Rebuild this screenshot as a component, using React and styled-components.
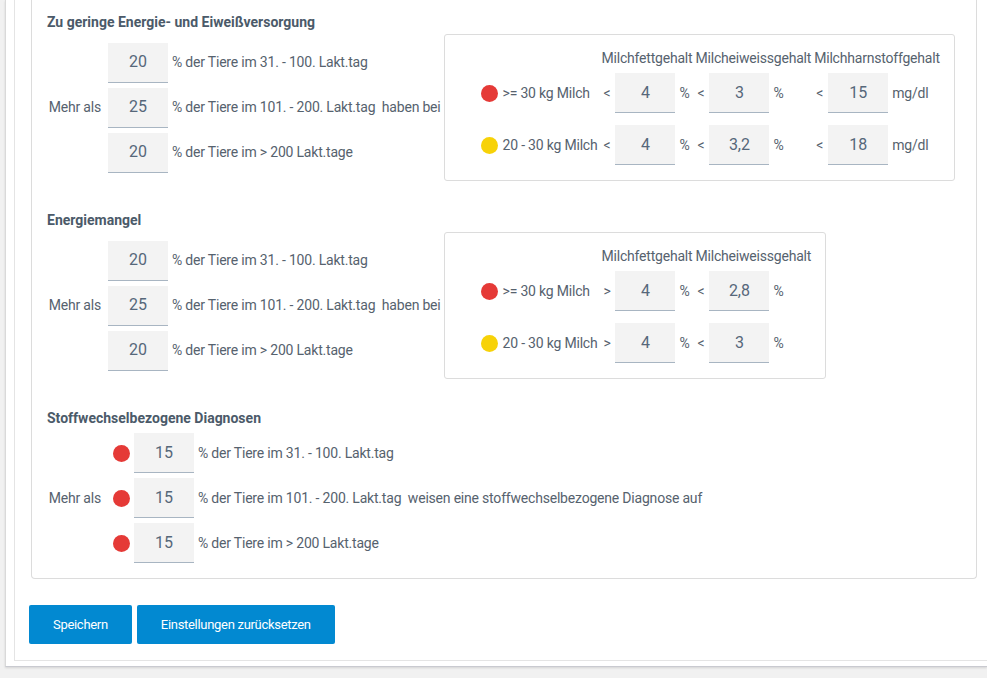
import React from "react";
import styled, { createGlobalStyle } from "styled-components";

const GlobalStyle = createGlobalStyle`
  html, body { margin: 0; padding: 0; }
  body {
    background: #f1f1f1;
    font-family: Roboto, "Noto Sans", "Liberation Sans", sans-serif;
    font-size: 14px;
    color: #56626e;
    letter-spacing: -0.2px;
  }
  * { box-sizing: border-box; }
`;

const Shell = styled.div`
  padding-left: 5px;
  padding-bottom: 9px;
`;

const OuterPanel = styled.div`
  background: #fff;
  border-left: 1px solid #d9d9d9;
  border-bottom: 1px solid #c9cad0;
  box-shadow: 0 1px 2px rgba(0, 0, 0, 0.12);
  padding: 0 0 5px 8px;
`;

const InnerPanel = styled.div`
  border-left: 1px solid #e4e4e4;
  border-bottom: 1px solid #e4e4e4;
  padding: 0 0 16px 16px;
`;

const Card = styled.div`
  width: 946px;
  border: 1px solid #dcdcdc;
  border-top: none;
  border-radius: 0 0 4px 4px;
  padding: 14px 15px 15px 15px;
`;

const Heading = styled.h3`
  margin: ${(p) => (p.$first ? "0" : "31px")} 0 0 0;
  font-size: 14px;
  line-height: 17px;
  font-weight: 700;
  letter-spacing: 0;
  color: #4b5a69;
`;

const SectionRow = styled.div`
  display: flex;
  align-items: center;
  gap: 3px;
  margin-top: 3px;
`;

const ShareGrid = styled.div`
  display: grid;
  width: max-content;
  justify-content: start;
  grid-template-columns: ${(p) => (p.$dots ? "61px auto 60px auto" : "61px 60px auto")};
  row-gap: 5px;
  align-items: center;
  margin-top: ${(p) => (p.$dots ? "6px" : "0")};
`;

const RowLabel = styled.div`
  grid-column: 1;
  grid-row: 1 / span 3;
  align-self: center;
  text-align: right;
  padding-right: 7px;
  line-height: 17px;
  white-space: nowrap;
`;

const Field = styled.input`
  width: 60px;
  height: 40px;
  border: none;
  border-bottom: 1px solid #a8b5c2;
  background: #f3f3f3;
  font-family: inherit;
  font-size: 16px;
  color: #56677a;
  text-align: center;
  padding: 0 0 1px;
  letter-spacing: 0;
  outline: none;
`;

const ShareText = styled.span`
  padding-left: 4px;
  white-space: pre;
  line-height: 17px;
`;

const Dot = styled.span`
  display: inline-block;
  flex: none;
  width: ${(p) => p.$size}px;
  height: ${(p) => p.$size}px;
  border-radius: 50%;
  background: ${(p) => (p.$tone === "yellow" ? "#f7d208" : "#e53a37")};
`;

const DotCell = styled.div`
  display: flex;
  align-items: center;
  padding: 0 4px 0 5px;
`;

const LimitBox = styled.div`
  flex: none;
  border: 1px solid #dcdcdc;
  border-radius: 3px;
  padding: 15px 14px 15px 36px;
  display: grid;
  grid-template-columns: auto repeat(${(p) => p.$groups}, auto);
  grid-template-rows: 17px 46px 52px;
  column-gap: 3px;
  align-items: end;
`;

const ColHead = styled.div`
  line-height: 17px;
  white-space: nowrap;
`;

const MilkLabel = styled.div`
  height: 40px;
  display: flex;
  align-items: center;
  gap: 5px;
  padding-right: 1px;
  white-space: nowrap;
`;

const Limit = styled.div`
  height: 40px;
  display: flex;
  align-items: center;
`;

const Op = styled.span`
  width: 14px;
  padding-left: 2px;
  flex: none;
`;

const Unit = styled.span`
  padding-left: 4px;
  white-space: nowrap;
`;

const Actions = styled.div`
  display: flex;
  gap: 5px;
  margin-top: 26px;
  margin-left: -2px;
`;

const Button = styled.button`
  height: 39px;
  padding: 0 24px;
  border: none;
  border-radius: 2px;
  background: #0289d1;
  color: #fff;
  font-family: inherit;
  font-size: 13px;
  letter-spacing: -0.3px;
  cursor: pointer;
`;

const periods = [
  "% der Tiere im 31. - 100. Lakt.tag",
  "% der Tiere im 101. - 200. Lakt.tag",
  "% der Tiere im > 200 Lakt.tage",
];

function ShareBlock({ values, verb, dots }) {
  return (
    <ShareGrid $dots={dots}>
      <RowLabel>Mehr als</RowLabel>
      {values.map((v, i) => (
        <React.Fragment key={i}>
          {dots && (
            <DotCell style={{ gridRow: i + 1, gridColumn: 2 }}>
              <Dot $size={17} $tone="red" />
            </DotCell>
          )}
          <Field
            readOnly
            defaultValue={v}
            style={{ gridRow: i + 1, gridColumn: dots ? 3 : 2 }}
          />
          <ShareText style={{ gridRow: i + 1, gridColumn: dots ? 4 : 3 }}>
            {periods[i] + (i === 1 ? `  ${verb}` : "")}
          </ShareText>
        </React.Fragment>
      ))}
    </ShareGrid>
  );
}

function MilkLimits({ columns, rows }) {
  return (
    <LimitBox $groups={columns.length}>
      <div />
      {columns.map((c) => (
        <ColHead key={c.title}>{c.title}</ColHead>
      ))}
      {rows.map((r) => (
        <React.Fragment key={r.label}>
          <MilkLabel>
            <Dot $size={17} $tone={r.tone} />
            {r.label}
          </MilkLabel>
          {columns.map((c, j) => (
            <Limit key={c.title}>
              <Op>{c.op}</Op>
              <Field readOnly defaultValue={r.values[j]} />
              <Unit>{c.unit}</Unit>
            </Limit>
          ))}
        </React.Fragment>
      ))}
    </LimitBox>
  );
}

export default function App() {
  return (
    <>
      <GlobalStyle />
      <Shell>
        <OuterPanel>
          <InnerPanel>
            <Card>
              <Heading $first>Zu geringe Energie- und Eiweißversorgung</Heading>
              <SectionRow>
                <ShareBlock values={["20", "25", "20"]} verb="haben bei" />
                <MilkLimits
                  columns={[
                    { title: "Milchfettgehalt", op: "<", unit: "%" },
                    { title: "Milcheiweissgehalt", op: "<", unit: "%" },
                    { title: "Milchharnstoffgehalt", op: "<", unit: "mg/dl" },
                  ]}
                  rows={[
                    { label: ">= 30 kg Milch", tone: "red", values: ["4", "3", "15"] },
                    { label: "20 - 30 kg Milch", tone: "yellow", values: ["4", "3,2", "18"] },
                  ]}
                />
              </SectionRow>

              <Heading>Energiemangel</Heading>
              <SectionRow>
                <ShareBlock values={["20", "25", "20"]} verb="haben bei" />
                <MilkLimits
                  columns={[
                    { title: "Milchfettgehalt", op: ">", unit: "%" },
                    { title: "Milcheiweissgehalt", op: "<", unit: "%" },
                  ]}
                  rows={[
                    { label: ">= 30 kg Milch", tone: "red", values: ["4", "2,8"] },
                    { label: "20 - 30 kg Milch", tone: "yellow", values: ["4", "3"] },
                  ]}
                />
              </SectionRow>

              <Heading>Stoffwechselbezogene Diagnosen</Heading>
              <ShareBlock
                dots
                values={["15", "15", "15"]}
                verb="weisen eine stoffwechselbezogene Diagnose auf"
              />
            </Card>
            <Actions>
              <Button>Speichern</Button>
              <Button>Einstellungen zurücksetzen</Button>
            </Actions>
          </InnerPanel>
        </OuterPanel>
      </Shell>
    </>
  );
}
